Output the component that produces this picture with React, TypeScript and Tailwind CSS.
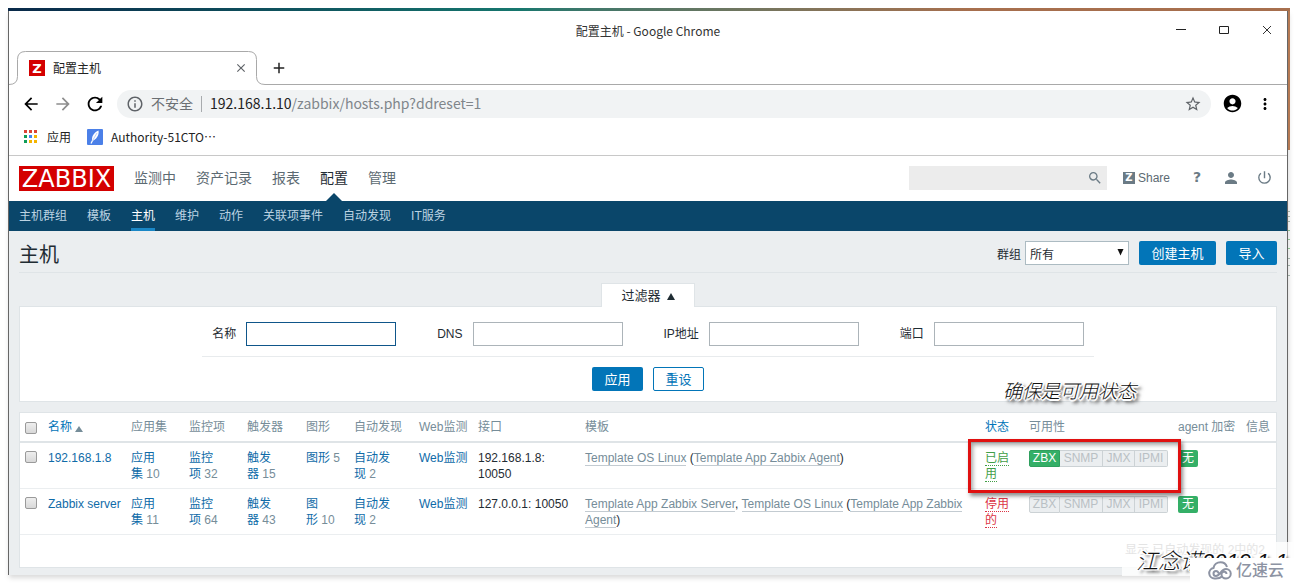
import React from "react";
import {
  MdAccountCircle,
  MdArrowBack,
  MdArrowForward,
  MdClose,
  MdInfoOutline,
  MdAdd,
  MdMoreVert,
  MdPerson,
  MdPowerSettingsNew,
  MdRefresh,
  MdSearch,
  MdStarBorder,
} from "react-icons/md";

const mainMenu = ["监测中", "资产记录", "报表", "配置", "管理"];
const subMenu = ["主机群组", "模板", "主机", "维护", "动作", "关联项事件", "自动发现", "IT服务"];

type Host = {
  name: string;
  counts: [string, string, string][];
  iface: string;
  templates: React.ReactNode;
  enabled: boolean;
  status: string;
};

function Tpl({ children }: { children: React.ReactNode }) {
  return (
    <a href="#template" className="border-b border-[#c3cbd1] text-[#768d99]">
      {children}
    </a>
  );
}

const hosts: Host[] = [
  {
    name: "192.168.1.8",
    counts: [
      ["应用集", "10", "apps"],
      ["监控项", "32", "items"],
      ["触发器", "15", "triggers"],
      ["图形", "5", "graphs"],
      ["自动发现", "2", "discovery"],
    ],
    iface: "192.168.1.8: 10050",
    templates: (
      <>
        <Tpl>Template OS Linux</Tpl> (<Tpl>Template App Zabbix Agent</Tpl>)
      </>
    ),
    enabled: true,
    status: "已启用",
  },
  {
    name: "Zabbix server",
    counts: [
      ["应用集", "11", "apps"],
      ["监控项", "64", "items"],
      ["触发器", "43", "triggers"],
      ["图形", "10", "graphs"],
      ["自动发现", "2", "discovery"],
    ],
    iface: "127.0.0.1: 10050",
    templates: (
      <>
        <Tpl>Template App Zabbix Server</Tpl>, <Tpl>Template OS Linux</Tpl> (
        <Tpl>Template App Zabbix Agent</Tpl>)
      </>
    ),
    enabled: false,
    status: "停用的",
  },
];

function WindowTitle() {
  return (
    <div className="relative flex h-[40px] items-center justify-center text-[12px] text-[#333]">
      <span>配置主机 - Google Chrome</span>
      <div className="absolute top-[9px] right-[10px] flex gap-[23px]">
        <button aria-label="最小化" className="flex size-5 items-center justify-center">
          <svg width="12" height="12" viewBox="0 0 12 12" stroke="#222" fill="none">
            <path d="M1 5.500h10" />
          </svg>
        </button>
        <button aria-label="最大化" className="flex size-5 items-center justify-center">
          <svg width="12" height="12" viewBox="0 0 12 12" stroke="#222" fill="none">
            <path d="M1.500 2.500h9v7h-9z" />
          </svg>
        </button>
        <button aria-label="关闭" className="flex size-5 items-center justify-center">
          <svg width="12" height="12" viewBox="0 0 12 12" stroke="#333" fill="none">
            <path d="M2 2l8 8M10 2l-8 8" />
          </svg>
        </button>
      </div>
    </div>
  );
}

function TabStrip() {
  return (
    <div className="flex h-[34px]">
      <div className="relative flex w-[256px] shrink-0 items-center pr-[9px] pl-[20px]">
        <svg className="absolute top-0 left-0" width="256" height="34" viewBox="0 0 256 34" fill="none" stroke="#a9a9a9">
          <path d="M0 33.500q8.500 0 8.500-8V8.500q0-8 8-8h223q8 0 8 8v17q0 8 8.500 8" />
        </svg>
        <span className="flex size-4 items-center justify-center bg-[#d40000] font-['DejaVu_Sans'] text-[13px] leading-none font-bold text-white">
          Z
        </span>
        <span className="ml-2 flex-1 text-[12px] text-[#222]">配置主机</span>
        <button aria-label="关闭标签页" className="relative mr-2 text-[#5f6368]">
          <MdClose size={14} />
        </button>
      </div>
      <div className="flex flex-1 items-center border-b border-[#a9a9a9] pl-[5px] text-[#222]">
        <button aria-label="新标签页">
          <MdAdd size={18} />
        </button>
      </div>
    </div>
  );
}

function Toolbar() {
  return (
    <div className="flex h-[37px] items-center pr-[13px] pl-[12px] text-black">
      <button aria-label="后退"><MdArrowBack size={20} /></button>
      <button aria-label="前进" className="ml-[12px] text-[#8d8d8d]"><MdArrowForward size={20} /></button>
      <button aria-label="刷新" className="ml-[11px]"><MdRefresh size={22} /></button>
      <div className="ml-[11px] flex h-7 flex-1 items-center rounded-full bg-[#f1f3f4] pr-[9px] pl-[9px] text-[14px]">
        <MdInfoOutline size={18} className="text-[#5f6368]" />
        <span className="ml-[7px] text-[#6b6f73]">不安全</span>
        <span className="mx-[8px] h-4 w-px bg-[#a8abae]" />
        <span className="text-[#222]">
          192.168.1.10<span className="text-[#80868b]">/zabbix/hosts.php?ddreset=1</span>
        </span>
        <MdStarBorder size={18} className="ml-auto text-[#5f6368]" />
      </div>
      <button aria-label="用户" className="ml-[11px]"><MdAccountCircle size={21} /></button>
      <button aria-label="菜单" className="ml-[13px]"><MdMoreVert size={18} /></button>
    </div>
  );
}

const appDots = ["#db4437", "#db4437", "#db4437", "#0f9d58", "#4285f4", "#f4b400", "#0f9d58", "#f4b400", "#f4b400"];

function Bookmarks() {
  return (
    <div className="flex h-[34px] items-center border-b border-[#c8c8c8] pb-[4px] pl-[15px] text-[12px] text-[#222]">
      <a href="#apps" className="flex items-center gap-[10px]">
        <svg width="13" height="13" viewBox="0 0 13 13">
          {appDots.map((c, i) => (
            <rect key={i} x={(i % 3) * 5} y={Math.floor(i / 3) * 5} width="3" height="3" fill={c} />
          ))}
        </svg>
        应用
      </a>
      <a href="#authority" className="ml-4 flex items-center gap-2">
        <svg width="16" height="16" viewBox="0 0 16 16">
          <rect width="16" height="16" rx="1" fill="#4b80e8" />
          <path d="M11.500 1.500C7 3.500 4.500 7 5 12C9 11 12.500 6 11.500 1.500z" fill="#fff" />
          <path d="M10 4L5 12.500" stroke="#a9c4f7" strokeWidth="0.800" />
          <path d="M5.500 11.500L4 14.500" stroke="#fff" strokeWidth="1.200" />
        </svg>
        Authority-51CTO…
      </a>
    </div>
  );
}

function SiteHeader() {
  return (
    <>
      <header className="flex h-[45px] items-center pr-[14px] pl-[10px]">
        <a href="#home" className="flex h-[25px] w-[95px] items-center justify-center bg-[#d40000] font-['DejaVu_Sans'] text-[24px] leading-none text-white">
          ZABBIX
        </a>
        <nav className="ml-[20px] flex gap-5 self-stretch text-[14px]">
          {mainMenu.map((m) => (
            <a
              key={m}
              href="#menu"
              className={"relative flex items-center " + (m === "配置" ? "text-[#1f2c33]" : "text-[#5c6a72]")}
            >
              {m}
              {m === "配置" && (
                <svg className="absolute bottom-0 left-[6px]" width="16" height="8" viewBox="0 0 16 8">
                  <path d="M0 8L8 0l8 8z" fill="#0a466a" />
                </svg>
              )}
            </a>
          ))}
        </nav>
        <div className="ml-auto flex items-center pb-[2px]">
          <div className="flex h-6 w-[198px] items-center bg-[#ececec] pr-[4px] text-[#6b7b85]">
            <input aria-label="搜索" className="min-w-0 flex-1 bg-transparent px-1 text-[12px] outline-none" />
            <button aria-label="搜索按钮"><MdSearch size={16} /></button>
          </div>
          <a href="#share" className="ml-4 flex items-center gap-[3px] text-[12px] text-[#5c6a72]">
            <span className="flex size-3 items-center justify-center bg-[#6b7b85] font-['DejaVu_Sans'] text-[10px] leading-none font-bold text-white">
              Z
            </span>
            Share
          </a>
          <a href="#help" className="ml-[22px] w-[10px] text-center font-['DejaVu_Sans'] text-[14px] font-bold text-[#6b7b85]">?</a>
          <a href="#profile" aria-label="用户资料" className="ml-[20px] text-[#6b7b85]"><MdPerson size={18} /></a>
          <a href="#logout" aria-label="登出" className="ml-[16px] text-[#6b7b85]"><MdPowerSettingsNew size={17} /></a>
        </div>
      </header>
      <nav className="flex h-[30px] gap-5 bg-[#0a466a] pl-[10px] text-[12px] text-[#bcd3e2]">
        {subMenu.map((m) => (
          <a
            key={m}
            href="#submenu"
            className={
              "flex items-center border-b-[3px] pt-[2px] " +
              (m === "主机" ? "border-[#1a87c6] text-white" : "border-transparent")
            }
          >
            {m}
          </a>
        ))}
      </nav>
    </>
  );
}

function PageTitle() {
  return (
    <div className="flex h-[42px] items-center border-b border-[#dfe4e7]">
      <h1 className="flex-1 pt-[6px] text-[20px] text-[#1f2c33]">主机</h1>
      <div className="flex items-center pt-[3px]">
        <label htmlFor="group" className="pt-[4px]">群组</label>
        <span className="relative ml-[4px]">
          <select id="group" className="block h-6 w-[104px] appearance-none border border-[#acbbc2] bg-white pt-[4px] pl-1 text-[12px] leading-[18px]">
            <option>所有</option>
          </select>
          <svg className="pointer-events-none absolute top-[8px] right-[5px]" width="7" height="7" viewBox="0 0 7 7">
            <path d="M0.500 0h6L3.500 6.500z" fill="#111" />
          </svg>
        </span>
        <button className="ml-[10px] h-6 w-[77px] rounded-[2px] bg-[#0275b8] pt-[2px] text-[13px] text-white">创建主机</button>
        <button className="ml-[10px] h-6 w-[51px] rounded-[2px] bg-[#0275b8] pt-[2px] text-[13px] text-white">导入</button>
      </div>
    </div>
  );
}

const filterFields = [
  ["名称", "f-name"],
  ["DNS", "f-dns"],
  ["IP地址", "f-ip"],
  ["端口", "f-port"],
];

function Filter() {
  return (
    <section className="mt-[10px]">
      <div className="relative -mb-px flex justify-center">
        <button className="flex h-6 w-[94px] items-center justify-center gap-[6px] border border-b-0 border-[#dfe4e7] bg-white pt-px text-[13px]">
          过滤器
          <svg width="8" height="7" viewBox="0 0 8 7">
            <path d="M0 7L4 0l4 7z" fill="#1f2c33" />
          </svg>
        </button>
      </div>
      <form className="flex flex-col items-center border border-[#dfe4e7] bg-white pt-[14px] pb-[10px]" onSubmit={(e) => e.preventDefault()}>
        <div className="flex gap-[41px] border-b border-[#e8ebed] px-[10px] pb-[10px]">
          {filterFields.map(([label, id]) => (
            <div key={id} className="flex items-center gap-[10px]">
              <label htmlFor={id}>{label}</label>
              <input
                id={id}
                className={
                  "mt-px h-6 w-[150px] border bg-white px-1 outline-none " +
                  (id === "f-name" ? "border-[#0f568a]" : "border-[#acb4b9]")
                }
              />
            </div>
          ))}
        </div>
        <div className="mt-[10px] flex gap-[10px]">
          <button className="h-6 w-[51px] rounded-[2px] bg-[#0275b8] pt-[2px] text-[13px] text-white">应用</button>
          <button className="h-6 w-[51px] rounded-[2px] border border-[#0275b8] bg-white pt-[2px] text-[13px] text-[#0275b8]">重设</button>
        </div>
      </form>
    </section>
  );
}

function Availability({ zbx }: { zbx: boolean }) {
  return (
    <div className="flex h-[17px] w-[139px] rounded-[2px] text-[12px] leading-[15px]">
      <span
        className={
          "w-[31px] rounded-l-[2px] border text-center " +
          (zbx ? "border-[#2f9f5e] bg-[#34af67] text-white" : "border-[#ccd2d5] bg-[#ebeef0] text-[#b9c0c4]")
        }
      >
        ZBX
      </span>
      <span className="w-[43px] border-y border-r border-[#ccd2d5] bg-[#ebeef0] text-center text-[#b9c0c4]">SNMP</span>
      <span className="w-[32px] border-y border-r border-[#ccd2d5] bg-[#ebeef0] text-center text-[#b9c0c4]">JMX</span>
      <span className="w-[33px] rounded-r-[2px] border-y border-r border-[#ccd2d5] bg-[#ebeef0] text-center text-[#b9c0c4]">IPMI</span>
    </div>
  );
}

function Check({ label }: { label: string }) {
  return (
    <input
      type="checkbox"
      aria-label={label}
      className="mt-px block size-3 appearance-none rounded-[2px] border border-[#9a9a9a] bg-linear-to-b from-[#eee] to-[#d8d8d8]"
    />
  );
}

const headings = ["应用集", "监控项", "触发器", "图形", "自动发现", "Web监测", "接口", "模板"];

function HostTable() {
  return (
    <div className="relative mt-[10px] border border-[#dfe4e7] bg-white pb-8">
      <table className="w-full table-fixed text-left [&_td]:px-[5px] [&_td]:pt-[7px] [&_td]:pb-[6px] [&_td]:align-top [&_th]:px-[5px] [&_th]:pt-[6px] [&_th]:pb-[6px] [&_th]:font-normal">
        <colgroup>
          <col className="w-[23px]" />
          <col className="w-[83px]" />
          <col className="w-[58px]" />
          <col className="w-[58px]" />
          <col className="w-[59px]" />
          <col className="w-[48px]" />
          <col className="w-[65px]" />
          <col className="w-[59px]" />
          <col className="w-[107px]" />
          <col />
          <col className="w-[44px]" />
          <col className="w-[149px]" />
          <col className="w-[68px]" />
          <col className="w-[35px]" />
        </colgroup>
        <thead>
          <tr className="border-b-2 border-[#dfe4e7] whitespace-nowrap text-[#768d99]">
            <th><Check label="全选" /></th>
            <th>
              <a href="#sort" className="flex items-center gap-[3px] text-[#0275b8]">
                名称
                <svg className="mt-[3px]" width="8" height="6" viewBox="0 0 8 6">
                  <path d="M0 6L4 0l4 6z" fill="#768d99" />
                </svg>
              </a>
            </th>
            {headings.map((h) => (
              <th key={h}>{h}</th>
            ))}
            <th><a href="#sort-status" className="text-[#0275b8]">状态</a></th>
            <th>可用性</th>
            <th>agent 加密</th>
            <th>信息</th>
          </tr>
        </thead>
        <tbody>
          {hosts.map((h) => (
            <tr key={h.name} className="border-b border-[#ebeef0]">
              <td><Check label={h.name} /></td>
              <td className="whitespace-nowrap"><a href="#host" className="text-[#0f6ba8]">{h.name}</a></td>
              {h.counts.map(([label, n, id]) => (
                <td key={id} className="text-[#768d99]">
                  <a href={"#" + id} className="text-[#0f6ba8]">{label}</a>{"\u00a0" + n}
                </td>
              ))}
              <td className="whitespace-nowrap"><a href="#web" className="text-[#0f6ba8]">Web监测</a></td>
              <td>{h.iface}</td>
              <td>{h.templates}</td>
              <td>
                <a
                  href="#status"
                  className={"border-b border-dotted " + (h.enabled ? "border-[#429e47] text-[#429e47]" : "border-[#dc3545] text-[#dc3545]")}
                >
                  {h.status}
                </a>
              </td>
              <td><Availability zbx={h.enabled} /></td>
              <td>
                <span className="block h-[17px] w-5 rounded-[2px] bg-[#34af67] text-center leading-[17px] text-white">无</span>
              </td>
              <td />
            </tr>
          ))}
        </tbody>
      </table>
      <div className="pointer-events-none absolute top-[26px] right-[95px] h-[54px] w-[213px] border-[3px] border-[#e01010] shadow-[2px_3px_4px_rgba(0,0,0,0.45),inset_2px_3px_4px_rgba(0,0,0,0.35)]" />
      <div className="pointer-events-none absolute top-[-35px] right-[140px] text-[19px] leading-[28px] font-light text-[#111] italic [text-shadow:1px_1px_#fff,-1px_-1px_#fff,1px_-1px_#fff,-1px_1px_#fff,2px_0_#fff,-2px_0_#fff,0_2px_#fff,3px_3px_3px_#222,3px_3px_4px_#444]">
        确保是可用状态
      </div>
    </div>
  );
}

function Watermark() {
  return (
    <div className="absolute top-[542px] right-0 h-[41px] w-[177px] overflow-hidden">
      <div className="absolute top-0 right-[6px] h-[16px] w-[168px] bg-white/80 text-[12px] leading-[16px] whitespace-nowrap text-[#e4e4e4]">
        显示 已自动发现的 2中的2
      </div>
      <div className="absolute top-[16px] left-0 h-[18px] w-[177px] bg-white/80" />
      <div className="absolute top-[5px] left-[14px] text-[22px] leading-[30px] font-light whitespace-nowrap text-[#111] italic [text-shadow:1px_1px_#fff,-1px_-1px_#fff,1px_-1px_#fff,-1px_1px_#fff,2px_0_#fff,-2px_0_#fff,3px_3px_3px_#333]">
        江念诺2019.1.1
      </div>
      <div className="absolute right-0 bottom-0 flex h-[25px] w-[109px] items-center gap-[3px] bg-white pl-[18px] text-[16px] font-medium text-[#8d93a3]">
        <svg width="25" height="19" viewBox="0 0 25 19" fill="none" stroke="#8d93a3" strokeWidth="2">
          <path d="M10.500 12.500a2.500 2.500 0 1 0-2.500 2.500c4 0 5-7 10-7a4.700 4.700 0 1 1 0 9.500c-2.800 0-4.500-2-4.500-4a2.500 2.500 0 0 1 5-.5" />
          <path d="M14 15.500c-2 2-4.500 2.200-7.500 2A5.300 5.300 0 0 1 5.500 7C6 3.500 9 1.200 12.500 1.200c3 0 5.500 1.800 6.500 4.800" />
        </svg>
        亿速云
      </div>
    </div>
  );
}

export default function App() {
  return (
    <div lang="zh-CN" className="relative bg-white pt-2 pr-[9px] pb-[9px] pl-2 font-['Liberation_Sans','Noto_Sans_CJK_SC',sans-serif]">
      <div className="h-[3px] bg-linear-to-r from-[#0a2a4a] via-[#17786f] via-40% to-[#a8704e] to-75%" />
      <div className="flex items-start">
        <div className="min-w-0 flex-1 border-x border-[#666] bg-white shadow-[1px_3px_5px_rgba(0,0,0,0.15)]">
          <div className="font-['Noto_Sans_CJK_SC',sans-serif]">
            <WindowTitle />
            <TabStrip />
            <Toolbar />
            <Bookmarks />
          </div>
          <SiteHeader />
          <main className="bg-[#ebeef0] px-[10px] pb-[7px] text-[12px] leading-4 text-[#1f2c33]">
            <PageTitle />
            <Filter />
            <HostTable />
          </main>
        </div>
        <div className="w-[2px]">
          <div className="h-[139px] bg-[#b57a54]" />
          <svg className="mt-[60px] block" width="2" height="66" viewBox="0 0 2 66">
            <path d="M0 1.500h2M0 6.500h2M0 11.500h2M0 48.500h2M0 55.500h2M0 65.500h2" stroke="#9fb0a6" />
            <path d="M0 20.500h2M0 29.500h2M0 38.500h2" stroke="#8cc08f" />
          </svg>
        </div>
      </div>
      <Watermark />
    </div>
  );
}
